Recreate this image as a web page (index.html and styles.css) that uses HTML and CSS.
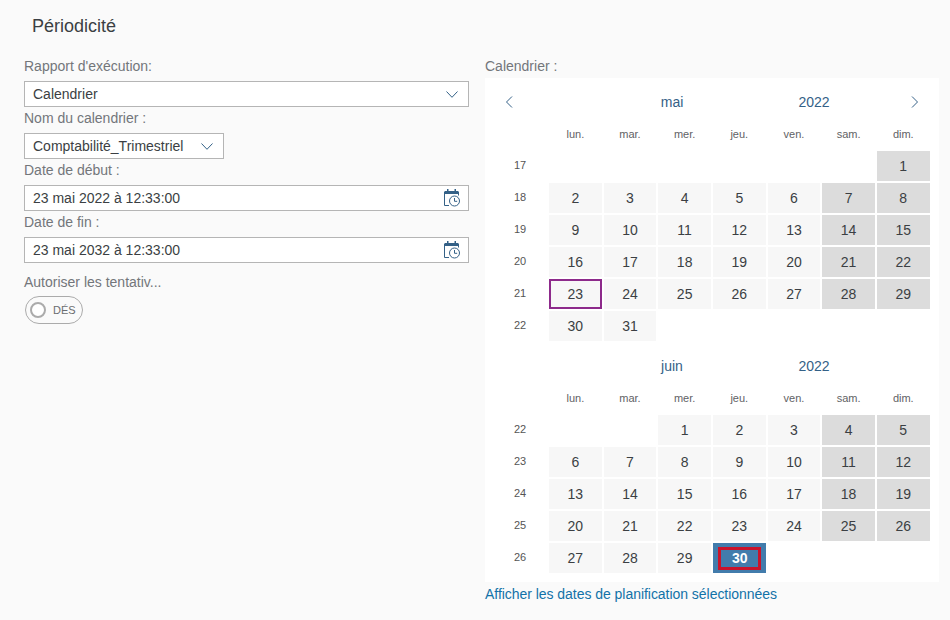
FILE: index.html
```html
<!DOCTYPE html>
<html lang="fr">
<head>
<meta charset="utf-8">
<title>Périodicité</title>
<link rel="stylesheet" href="styles.css">
</head>
<body>
<svg class="defs" width="0" height="0" aria-hidden="true">
  <symbol id="chev" viewBox="0 0 12 7"><path d="M.5.5 6 6.300 11.500.5" fill="none" stroke="currentColor"/></symbol>
  <symbol id="calclock" viewBox="0 0 17 18">
    <path d="M3 0h1.500v2H3zM10.500 0H12v2h-1.500z" fill="currentColor"/>
    <path d="M.5 2h14v3H.5z" fill="currentColor"/>
    <path d="M.5 3v13.500h4.500M14.500 3v3.500" fill="none" stroke="currentColor"/>
    <circle cx="10.500" cy="12" r="5" fill="#fff" stroke="currentColor"/>
    <path d="M10.500 9v3.300h2.700" fill="none" stroke="currentColor"/>
  </symbol>
</svg>
<h1 class="title">Périodicité</h1>
<main class="layout">
  <section class="form">
    <label class="label">Rapport d'exécution:</label>
    <div class="field"><span>Calendrier</span><svg class="chev"><use href="#chev"/></svg></div>
    <label class="label">Nom du calendrier :</label>
    <div class="field short"><span>Comptabilité_Trimestriel</span><svg class="chev"><use href="#chev"/></svg></div>
    <label class="label">Date de début :</label>
    <div class="field"><span>23 mai 2022 à 12:33:00</span><svg class="cal-icon"><use href="#calclock"/></svg></div>
    <label class="label">Date de fin :</label>
    <div class="field"><span>23 mai 2032 à 12:33:00</span><svg class="cal-icon"><use href="#calclock"/></svg></div>
    <label class="label retry">Autoriser les tentativ...</label>
    <div class="toggle"><span class="knob"></span><span class="toggle-text">DÉS</span></div>
  </section>
  <section class="schedule">
    <label class="label">Calendrier :</label>
    <div class="panel">
      <div class="month-head">
        <svg class="nav" viewBox="0 0 8 12"><path d="M7 .5 1.500 6 7 11.500" fill="none" stroke="currentColor"/></svg>
        <span class="month-name">mai</span>
        <span class="month-name">2022</span>
        <svg class="nav next" viewBox="0 0 8 12"><path d="M1 .5 6.500 6 1 11.500" fill="none" stroke="currentColor"/></svg>
      </div>
      <div class="grid">
        <span></span><span class="dow">lun.</span><span class="dow">mar.</span><span class="dow">mer.</span><span class="dow">jeu.</span><span class="dow">ven.</span><span class="dow">sam.</span><span class="dow">dim.</span>
        <span class="wk">17</span><span></span><span></span><span></span><span></span><span></span><span></span><span class="d we">1</span>
        <span class="wk">18</span><span class="d">2</span><span class="d">3</span><span class="d">4</span><span class="d">5</span><span class="d">6</span><span class="d we">7</span><span class="d we">8</span>
        <span class="wk">19</span><span class="d">9</span><span class="d">10</span><span class="d">11</span><span class="d">12</span><span class="d">13</span><span class="d we">14</span><span class="d we">15</span>
        <span class="wk">20</span><span class="d">16</span><span class="d">17</span><span class="d">18</span><span class="d">19</span><span class="d">20</span><span class="d we">21</span><span class="d we">22</span>
        <span class="wk">21</span><span class="d today">23</span><span class="d">24</span><span class="d">25</span><span class="d">26</span><span class="d">27</span><span class="d we">28</span><span class="d we">29</span>
        <span class="wk">22</span><span class="d">30</span><span class="d">31</span>
      </div>
      <div class="month-head second">
        <span class="month-name">juin</span>
        <span class="month-name">2022</span>
      </div>
      <div class="grid">
        <span></span><span class="dow">lun.</span><span class="dow">mar.</span><span class="dow">mer.</span><span class="dow">jeu.</span><span class="dow">ven.</span><span class="dow">sam.</span><span class="dow">dim.</span>
        <span class="wk">22</span><span></span><span></span><span class="d">1</span><span class="d">2</span><span class="d">3</span><span class="d we">4</span><span class="d we">5</span>
        <span class="wk">23</span><span class="d">6</span><span class="d">7</span><span class="d">8</span><span class="d">9</span><span class="d">10</span><span class="d we">11</span><span class="d we">12</span>
        <span class="wk">24</span><span class="d">13</span><span class="d">14</span><span class="d">15</span><span class="d">16</span><span class="d">17</span><span class="d we">18</span><span class="d we">19</span>
        <span class="wk">25</span><span class="d">20</span><span class="d">21</span><span class="d">22</span><span class="d">23</span><span class="d">24</span><span class="d we">25</span><span class="d we">26</span>
        <span class="wk">26</span><span class="d">27</span><span class="d">28</span><span class="d">29</span><span class="d selected"><span class="focus">30</span></span>
      </div>
    </div>
    <a class="link" href="#">Afficher les dates de planification sélectionnées</a>
  </section>
</main>
</body>
</html>
```

FILE: styles.css
```css
* { box-sizing: border-box; }
html, body { height: 100%; }
body {
  margin: 0;
  background: #fafafa;
  color: #3b3f43;
  font-family: "Liberation Sans", Arial, sans-serif;
  font-size: 14px;
  overflow: hidden;
}
.defs { position: absolute; }
.title {
  margin: 0;
  padding: 14px 0 0 32px;
  height: 55px;
  font-size: 18px;
  line-height: 24px;
  font-weight: 400;
}
.layout { display: flex; padding-left: 24px; gap: 16px; }
.form { width: 445px; }
.schedule { width: 454px; }
.label {
  display: block;
  height: 26px;
  padding-bottom: 4px;
  line-height: 22px;
  font-size: 14px;
  color: #73767a;
}
.field {
  display: flex;
  align-items: center;
  justify-content: space-between;
  height: 26px;
  padding: 0 10px 0 8px;
  background: #fff;
  border: 1px solid #b5b5b5;
  line-height: 24px;
}
.short { width: 200px; }
.chev { width: 12px; height: 7px; color: #346187; }
.cal-icon { width: 17px; height: 18px; margin-right: -3px; color: #346187; }
.retry { margin-top: 8px; height: 25px; }
.toggle {
  display: flex;
  align-items: center;
  width: 58px;
  height: 28px;
  margin-left: 1px;
  padding-left: 4px;
  border: 1px solid #ababab;
  border-radius: 14px;
}
.knob {
  width: 16px;
  height: 16px;
  background: #fff;
  border: 2px solid #ababab;
  border-radius: 50%;
}
.toggle-text { margin-left: 7px; font-size: 11px; color: #6a6d70; }
.panel {
  height: 504px;
  margin-bottom: 1px;
  padding-top: 10px;
  background: #fff;
}
.schedule .label { height: 23px; padding: 0; }
.month-head {
  display: flex;
  align-items: center;
  height: 28px;
  padding-left: 20px;
}
.nav { width: 8px; height: 12px; color: #346187; flex: none; }
.month-name {
  width: 142px;
  text-align: center;
  color: #346187;
  font-size: 14px;
}
.nav + .month-name { margin-left: 88px; }
.next { margin-left: 26px; }
.second { margin-top: 11px; padding-left: 116px; }
.grid {
  display: grid;
  grid-template-columns: 62px repeat(7, 52.670px);
  grid-template-rows: 33px;
  grid-auto-rows: 30px;
  column-gap: 2px;
  row-gap: 2px;
}
.dow {
  display: flex;
  align-items: center;
  justify-content: center;
  padding-top: 2px;
  font-size: 11px;
  color: #5f6265;
}
.wk {
  display: flex;
  align-items: center;
  justify-content: center;
  padding: 0 0 2px 8px;
  font-size: 11px;
  color: #555;
}
.d {
  display: flex;
  align-items: center;
  justify-content: center;
  background: #f7f7f7;
}
.we { background: #dcdcdc; }
.today { border: 2px solid #8d2a8b; }
.selected { background: #427cac; color: #fff; font-weight: 700; }
.focus {
  display: flex;
  align-items: center;
  justify-content: center;
  width: 43px;
  height: 23px;
  margin-left: 1px;
  border: 3px solid #c9142c;
}
.link {
  color: #1272a8;
  text-decoration: none;
  font-size: 14px;
  line-height: 22px;
  letter-spacing: -0.04px;
}
```
